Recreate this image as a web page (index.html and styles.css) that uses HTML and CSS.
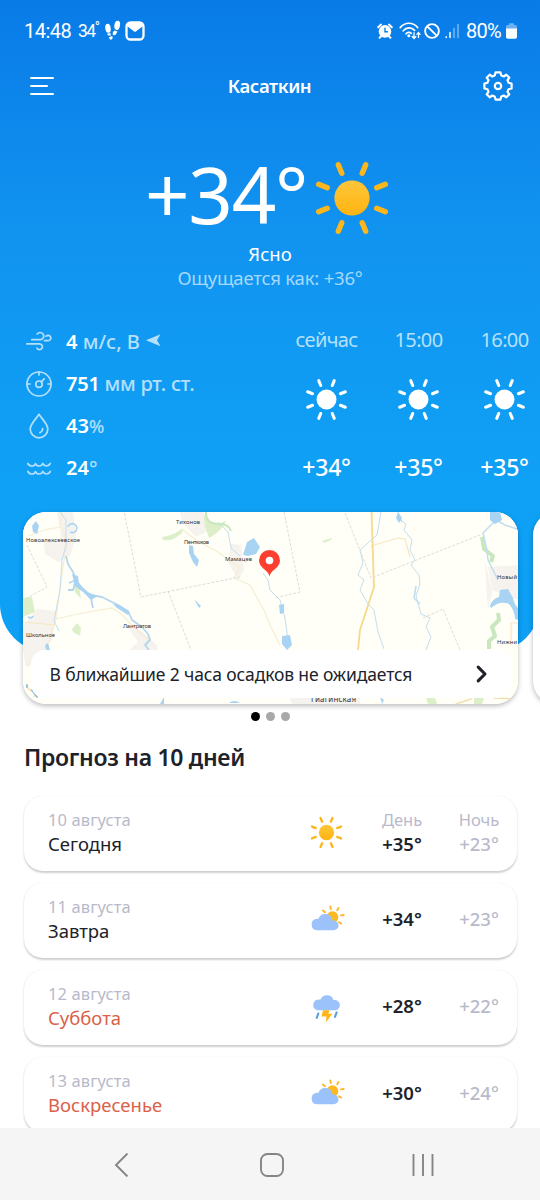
FILE: index.html
```html
<!DOCTYPE html>
<html lang="ru">
<head>
<meta charset="utf-8">
<title>Погода — Касаткин</title>
<link rel="stylesheet" href="styles.css">
</head>
<body>
<svg class="defs" width="0" height="0">
  <defs>
    <linearGradient id="sunFill" x1="0" y1="0" x2="0" y2="1"><stop offset="0" stop-color="#fdc63a"/><stop offset="1" stop-color="#ffb410"/></linearGradient>
    <symbol id="rays" viewBox="-38 -38 76 76">
      <g stroke="currentColor" stroke-width="5.4" stroke-linecap="round">
        <path d="M10.2-24.7 13.7-33.3M24.7-10.2 33.3-13.7M24.7 10.2 33.3 13.7M10.2 24.7 13.7 33.3M-10.2 24.7-13.7 33.3M-24.7 10.2-33.3 13.7M-24.7-10.2-33.3-13.7M-10.2-24.7-13.7-33.3"/>
      </g>
    </symbol>
    <symbol id="sun" viewBox="-38 -38 76 76">
      <use href="#rays" x="-38" y="-38" width="76" height="76"/>
      <circle r="17.6" fill="var(--core, currentColor)"/>
    </symbol>
    <symbol id="partly" viewBox="0 0 36 28">
      <path d="M20.3 2.5 20.8 5M28.6 4 27.2 6.2M30.9 11.4 33.7 11M28.9 18.3 31.1 19.6M12.9 6.5 15 8.2" stroke="#fdb62a" stroke-width="1.9" stroke-linecap="round" fill="none"/>
      <circle cx="22.4" cy="13.2" r="5.9" fill="#fdb91f"/>
      <path d="M6.8 26.3a5.8 5.8 0 0 1-.2-11.5c1 0 1.500.2 1.800.2a7.300 7.300 0 0 1 14.200 1.600c.4-.1.800-.1 1-.1a4.900 4.900 0 0 1 0 9.800z" fill="#9cc2fb"/>
    </symbol>
    <symbol id="storm" viewBox="0 0 36 34">
      <path d="M8 20.300a5.400 5.400 0 1 1 1.300-10.500 7 7 0 0 1 13.300.3 5.200 5.200 0 1 1 2.200 10.200z" fill="#9cc2fb"/>
      <path d="M12 20.300h6.400l-1 3.400h3.900l-6.200 8.600.3-5.900h-4.900z" fill="#fdb71a"/>
      <path d="M7.300 23.600 5.700 28M25.600 22.400 24 26.800" stroke="#5c9fdc" stroke-width="2.100" stroke-linecap="round"/>
    </symbol>
  </defs>
</svg>

<main class="screen">
  <section class="hero">
    <div class="status">
      <span class="clock">14:48</span>
      <span class="deg">34<sup>°</sup></span>
      <svg class="steps" viewBox="0 0 18 22" fill="#fff"><ellipse cx="4" cy="8.300" rx="2.700" ry="4.500" transform="rotate(-8 4 8.300)"/><path d="M3 13.800 6.300 12.900 7 15.500H4zM4.900 17.200l3.200-1.200c2 3-2.300 5.800-3.200 1.200z"/><ellipse cx="13.200" cy="5.300" rx="2.800" ry="4.700" transform="rotate(10 13.200 5.300)"/><path d="M10.300 10.500 13.500 11.600 12 14c-1.300 2.300-4.500 1-3-1.800z"/></svg>
      <svg class="mail" viewBox="0 0 20 20"><rect x="1.500" y="1.500" width="17" height="17" rx="4" fill="none" stroke="#fff" stroke-width="2.300"/><path d="M2 3.200Q2 2 4 2H16Q18 2 18 3.200V5L11.200 10.300Q10 11.300 8.800 10.300L2 5z" fill="#fff"/></svg>
      <span class="spacer"></span>
      <svg class="alarm" viewBox="0 0 16 16"><circle cx="8" cy="8.400" r="6.300" fill="#fff"/><path d="M1.200 4.200 4 1.600M14.800 4.200 12 1.600M2.600 14.800 4.300 13M13.400 14.800 11.700 13" stroke="#fff" stroke-width="2" stroke-linecap="round"/><path d="M8 4.800V8.700H11" fill="none" stroke="#0b80e6" stroke-width="1.400"/></svg>
      <svg class="wifi" viewBox="0 0 22 18" fill="none" stroke="#fff" stroke-width="1.700" stroke-linecap="round"><path d="M1.200 5.600C6-.2 14-.2 18.700 5.600M4.200 8.800C7.500 5 12.500 5 15.600 8.400M7 11.800C8.500 10 10.800 9.900 12.300 11.300"/><circle cx="9.800" cy="13.700" r=".7" fill="#fff"/><path d="M15 10.700V16M13.200 14.500 15 16.500 16.800 14.500M19.500 15.500V10.800M17.900 12.300 19.500 10.400 21.100 12.300" stroke-width="1.300"/></svg>
      <svg class="block" viewBox="0 0 16 16" fill="none" stroke="#fff" stroke-width="1.900"><circle cx="8" cy="8" r="6.900"/><path d="M3.300 3.300 12.700 12.700"/></svg>
      <svg class="signal" viewBox="0 0 14 16" stroke="#fff" stroke-width="1.500" stroke-linecap="round"><path d="M1.200 13.800V14.500M5 9.500V14.500"/><path d="M9 5.500V14.500M13 1.500V14.500" opacity=".45"/></svg>
      <span class="charge">80%</span>
      <svg class="battery" viewBox="0 0 11 16"><path d="M3 2V.8Q3 .2 3.600.2H7.400Q8 .2 8 .8V2H9.500Q11 2 11 3.500V6H0V3.500Q0 2 1.500 2z" fill="#fff" opacity=".4"/><path d="M0 5.500H11V14Q11 15.800 9.200 15.800H1.800Q0 15.800 0 14z" fill="#fff"/></svg>
    </div>

    <header class="topbar">
      <svg class="menu" viewBox="0 0 24 20" stroke="#fff" stroke-width="2" stroke-linecap="round"><path d="M1 2H23M1 10H17M1 18H23"/></svg>
      <h1 class="city">Касаткин</h1>
      <svg class="gear" viewBox="-15 -15 30 30" fill="none" stroke="#fff" stroke-width="2.200" stroke-linejoin="round"><path d="M-2.400-13.600H2.400L3.300-10.500Q4.700-10.100 5.800-9.500L8.300-11.300 11.300-8.300 9.500-5.800Q10.100-4.700 10.500-3.300L13.600-2.400V2.400L10.500 3.300Q10.100 4.700 9.500 5.800L11.300 8.300 8.300 11.300 5.800 9.500Q4.700 10.100 3.300 10.500L2.400 13.600H-2.400L-3.300 10.500Q-4.700 10.100-5.800 9.500L-8.300 11.300-11.300 8.300-9.500 5.800Q-10.100 4.700-10.500 3.300L-13.600 2.400V-2.400L-10.500-3.300Q-10.100-4.700-9.500-5.800L-11.300-8.300-8.300-11.300-5.800-9.500Q-4.700-10.100-3.300-10.500Z"/><circle r="3.200"/></svg>
    </header>

    <div class="now">
      <span class="now-temp">+34°</span>
      <svg class="now-sun"><use href="#sun"/></svg>
    </div>
    <p class="condition">Ясно</p>
    <p class="feels">Ощущается как: +36°</p>

    <div class="details">
      <ul class="metrics">
        <li>
          <svg class="metric-icon" viewBox="0 0 26 26"><path d="M.8 14.800H13.500A2.900 2.900 0 1 1 11 19.200M5.800 10.700H14.300A3.600 3.600 0 1 0 11.200 5M18.500 11.700H22.200A2.700 2.700 0 1 0 20 7.300"/></svg>
          <span class="m-wind"><b>4</b> м/с, В</span>
          <svg class="wind-dir" viewBox="0 0 15 13"><path d="M0 6.300 14.500.3 11 6.300 14.500 12.300z" fill="#b5e0fc"/></svg>
        </li>
        <li>
          <svg class="metric-icon" viewBox="0 0 26 26"><circle cx="13" cy="13" r="12"/><circle cx="13" cy="13.200" r="3.200"/><path d="M15.200 10.900 18.300 7.800M13 1V4M1 13H4M22 13H25"/></svg>
          <span class="m-press"><b>751</b> мм рт. ст.</span>
        </li>
        <li>
          <svg class="metric-icon" viewBox="0 0 26 26"><path d="M13 1.300C10.500 5.500 4.200 11 4.200 16A8.800 8.800 0 0 0 21.800 16C21.800 11 15.500 5.500 13 1.300ZM16.700 15.500Q16.500 18.500 13.800 19.700"/></svg>
          <span class="m-hum"><b>43</b>%</span>
        </li>
        <li>
          <svg class="metric-icon" viewBox="0 0 26 26"><path d="M1.800 8.500Q3.200 11 6 11T9.500 8.500Q10.200 11 13 11T16.700 8.500Q18 11 20.500 11T24.300 8.500M1.800 16.500Q3.200 19 6 19T9.500 16.500Q10.200 19 13 19T16.700 16.500Q18 19 20.500 19T24.300 16.500"/></svg>
          <span class="m-water"><b>24</b>°</span>
        </li>
      </ul>
      <div class="hours">
        <div class="hour"><span class="time now-label">сейчас</span><svg class="hour-sun"><use href="#sun"/></svg><span class="hour-temp">+34°</span></div>
        <div class="hour"><span class="time">15:00</span><svg class="hour-sun"><use href="#sun"/></svg><span class="hour-temp">+35°</span></div>
        <div class="hour"><span class="time">16:00</span><svg class="hour-sun"><use href="#sun"/></svg><span class="hour-temp">+35°</span></div>
      </div>
    </div>

    <div class="carousel">
      <article class="map-card">
        <svg class="map" viewBox="23 512 495 192" preserveAspectRatio="none">
          <rect x="23" y="512" width="495" height="192" fill="#fffff8"/>
          <g fill="#f6f2ee">
            <path d="M57 512H73L76 536 70 556 58 562 45 554 44 543 61 538ZM180 512H203L206 532 196 537 182 522ZM231 544 241 545 244 570 238 580 228 562ZM37 609 57 611 52 640 26 668 23 650V626ZM126 625 140 630 157 645 158 650H129L138 642ZM488 567 518 565V600L492 590ZM485 560 492 592 488 610 486 585ZM290 698H360V704H292Z"/>
          </g>
          <g fill="#dcefc9">
            <path d="M23 598 32 597 35 612 30 614 23 617ZM162 537Q175 535 183 528L182 533Q172 542 163 540ZM203 512Q206 523 218 524L226 521Q222 531 209 538L205 527ZM73 583 79 585 81 599 75 592ZM72 629 77 623 81 628 80 636 73 632ZM322 541 332 538 331 540 324 543ZM426 698H435L437 704H428ZM474 698H484L482 704H474Z"/>
          </g>
          <g fill="none" stroke="#c9e7bd" stroke-width="4" stroke-linejoin="round"><path d="M482 537 484 549 493 556 491 562M498 613 499 620 492 627 495 636 489 641V649" /><path d="M206 512Q205 524 219 524 229 524 231 531" stroke-width="2"/></g>
          <g fill="none" stroke="#f6edd2" stroke-width="1.200">
            <path d="M28 536 44 530 60 527 62 512M62 527 67 545 64 560 60 590 56 618 48 645 28 666M56 619 78 614 112 608 120 613 150 642M183 530 196 540 218 552 240 568 234 578 250 585 257 598 264 610 271 627 280 645"/>
            <path d="M23 622 55 625M371 546 398 538 405 539 410 557M511 645V623H518" stroke="#f8e6bf"/>
          </g>
          <path d="M371.500 512 374 587 360 630 358 650" fill="none" stroke="#f6d98a" stroke-width="1.800"/>
          <g fill="none" stroke="#d8d8d6" stroke-width=".9" stroke-dasharray="3 1.500">
            <path d="M124.500 513 141 597 240 577M168 591 191 650M27 545 47 587 27 598M284 512 300 592 275 598M345 513 371 578 480 535M423 618 443 609 460 650"/>
          </g>
          <g fill="none" stroke="#c3deed" stroke-width="1" stroke-linejoin="round">
            <path d="M60 512 66 520 66 545 62 560 60 590 54 621 59 631"/>
            <path d="M66 556 68 564 73 572 76 580 82 588 90 595 102 597 116 604 128 611 132 620 142 627 148 634 150 640 145 645 149 650M68 590 73 590 76 580 69 583M90 594 93 608" stroke="#b3d6ee" stroke-width="1.800"/>
            <path d="M218 522 228 532 231 548 240 556M263 573 268 580 270 590 280 600 285 618 288 640" />
            <path d="M381 512 377 535 360 550 363 563 358 575 364 580 360 590 368 604 374 610 378 632 384 649"/>
            <path d="M398 512 400 520 406 524 404 530 412 540 410 550 415 560 411 565 419 575 420 584 416 596 421 614 430 618 426 627 431 637 426 650"/>
            <path d="M398 515 402 522M416 586 414 598 420 604M520 530 505 525 496 520 483 533 487 550 488 560 498 580" stroke-width="1.600"/>
          </g>
          <g fill="#a9d3f2">
            <path d="M32 526 36 521 39 526 37 534 33 532ZM72 574 78 576 79 584 87 592 98 596 91 600 83 592 75 586ZM113 604 120 605 130 613 128 615 117 608ZM189 545 193 546 194 554 199 560 197 567 193 562 189 553ZM243 555 247 542 254 538 260 547 256 554 248 556ZM279 605 284 604 284 613 280 614ZM282 636 290 635 292 645 287 650 282 644ZM194 599 201 606 199 608ZM490 512H500L502 520 495 524 490 520ZM490 606Q492 599 499 597L500 590 508 589 513 598Q514 604 518 608V620L515 619Q515 611 509 604 500 600 491 608ZM45 645 48 643 50 650H46ZM229 703Q234 699 240 703ZM160 704 164 697V704ZM380 697 384 700 382 704ZM398 512 402 518 399 523 396 518Z"/>
            <path d="M68 527a4.500 4.500 0 1 1 2 5M28 617q4 2 5-1" fill="none" stroke="#a9d3f2" stroke-width="1.600"/>
          </g>
          <g fill="none" stroke-linecap="round"><path d="M27 687 31 691 35 690M34 696 38 694M456 704 471 699M494 698 518 699" stroke="#f2dfae" stroke-width="1.500"/><path d="M32 690 37 697M27 685V687" stroke="#8cbbe0" stroke-width="1.800"/></g>
          <g class="places">
            <text x="26" y="542" textLength="54">Новоалексеевское</text>
            <text x="26" y="637" textLength="29">Школьное</text>
            <text x="176" y="524" textLength="24">Тихонов</text>
            <text x="184" y="544" textLength="25">Пентюхов</text>
            <text x="225" y="561" textLength="27">Мамацев</text>
            <text x="123" y="628" textLength="28">Лантратов</text>
            <text x="497" y="579" textLength="20">Новый</text>
            <text x="497" y="644" textLength="20">Нижни</text>
            <text x="311" y="702" textLength="45" class="town">Гиагинская</text>
          </g>
          <path d="M269.500 576.500C268.500 570 259 568 259 560.500A10.500 10.500 0 0 1 280 560.500C280 568 270.500 570 269.500 576.500Z" fill="#fd3f32"/>
          <circle cx="269.500" cy="560.500" r="3.800" fill="#fff"/>
        </svg>
        <div class="notice">
          <span class="notice-text">В ближайшие 2 часа осадков не ожидается</span>
          <svg class="chevron" viewBox="0 0 12 18"><path d="M2.200 2.200 9 9 2.200 15.800" fill="none" stroke="#20222a" stroke-width="3.100" stroke-linecap="round" stroke-linejoin="round"/></svg>
        </div>
      </article>
      <article class="map-card next-card"></article>
    </div>
  </section>

  <div class="dots"><i class="active"></i><i></i><i></i></div>

  <section class="forecast">
    <h2 class="forecast-title">Прогноз на 10 дней</h2>
    <ul class="days">
      <li class="day today">
        <div class="when"><span class="date">10 августа</span><span class="name">Сегодня</span></div>
        <svg class="day-icon small-sun"><use href="#sun"/></svg>
        <div class="t hi"><span class="label">День</span><span class="value">+35°</span></div>
        <div class="t lo"><span class="label">Ночь</span><span class="value">+23°</span></div>
      </li>
      <li class="day">
        <div class="when"><span class="date">11 августа</span><span class="name">Завтра</span></div>
        <svg class="day-icon partly"><use href="#partly"/></svg>
        <div class="t hi"><span class="value">+34°</span></div>
        <div class="t lo"><span class="value">+23°</span></div>
      </li>
      <li class="day">
        <div class="when"><span class="date">12 августа</span><span class="name weekend">Суббота</span></div>
        <svg class="day-icon storm"><use href="#storm"/></svg>
        <div class="t hi"><span class="value">+28°</span></div>
        <div class="t lo"><span class="value">+22°</span></div>
      </li>
      <li class="day">
        <div class="when"><span class="date">13 августа</span><span class="name weekend">Воскресенье</span></div>
        <svg class="day-icon partly"><use href="#partly"/></svg>
        <div class="t hi"><span class="value">+30°</span></div>
        <div class="t lo"><span class="value">+24°</span></div>
      </li>
    </ul>
  </section>

  <nav class="navbar">
    <svg viewBox="0 0 24 24"><path d="M18.500.500 7 12 18.500 23.500"/></svg>
    <svg viewBox="0 0 24 24"><rect x="1" y="1" width="22" height="22" rx="6.500"/></svg>
    <svg viewBox="0 0 24 24"><path d="M2.500 1V23M12 1V23M21.500 1V23"/></svg>
  </nav>
</main>
</body>
</html>
```
FILE: styles.css
```css
* { box-sizing: border-box; margin: 0; padding: 0; }
ul { list-style: none; }
svg { display: block; flex: none; }
.defs { position: absolute; }

body {
  width: 540px;
  height: 1200px;
  overflow: hidden;
  background: #fff;
  font-family: "Noto Sans", "Open Sans", sans-serif;
  color: #20222a;
}
.screen { height: 1200px; display: flex; flex-direction: column; overflow: hidden; }

/* Hero */
.hero {
  flex: none;
  height: 652px;
  display: flex;
  flex-direction: column;
  color: #fff;
  background: linear-gradient(#097be7 0, #1193f0 230px, #0fa1f5 480px, #0c9ff4 100%);
  border-radius: 0 0 48px 48px;
}
.hero > * { flex: none; }

.status {
  height: 62px;
  padding: 0 23px 0 24px;
  display: flex;
  align-items: center;
  font-family: Roboto, sans-serif;
  white-space: nowrap;
}
.spacer { flex: 1; }
.clock { width: 54px; font-size: 20px; letter-spacing: -.5px; }
.deg { width: 26px; font-size: 17.500px; letter-spacing: -1.500px; }
.deg sup { font-size: 14px; line-height: 0; vertical-align: 5px; }
.steps { width: 18px; height: 22px; }
.mail { width: 20px; height: 20px; margin-left: 3px; }
.alarm { width: 16px; height: 16px; margin-right: 6px; }
.wifi { width: 22px; height: 18px; margin-right: 3px; }
.block { width: 16px; height: 16px; margin-right: 5px; }
.signal { width: 14px; height: 16px; margin-right: 7px; }
.charge { width: 40px; font-size: 20px; letter-spacing: -.7px; }
.battery { width: 11px; height: 16px; }

.topbar {
  height: 48px;
  padding: 0 27px 0 30px;
  display: grid;
  grid-template-columns: 60px 1fr 60px;
  align-items: center;
}
.menu { width: 24px; height: 20px; }
.city { text-align: center; padding-right: 4px; font-size: 18.500px; font-weight: 600; line-height: 48px; letter-spacing: -.4px; }
.gear { width: 30px; height: 30px; justify-self: end; }

.now {
  height: 126px;
  margin-top: 2px;
  padding-left: 145px;
  display: flex;
}
.now-temp { width: 169px; margin-top: 29px; font-size: 78px; line-height: 106px; letter-spacing: -1.300px; white-space: nowrap; }
.now-sun { width: 76px; height: 76px; margin-top: 48px; color: #fbb61c; --core: url(#sunFill); }
.condition { margin-top: 2px; text-align: center; font-size: 18.500px; line-height: 28px; }
.feels { text-align: center; font-size: 18.500px; line-height: 20px; letter-spacing: -.2px; color: #a5d8fb; }

.details { margin-top: 33px; display: flex; height: 191px; }
.metrics { flex: none; width: 280.500px; padding-left: 26px; }
.metrics li {
  height: 42px;
  display: flex;
  align-items: center;
  font-size: 20px;
  font-weight: 500;
  color: #b5e0fc;
  white-space: nowrap;
}
.metrics b { font-weight: 600; color: #fff; }
.metrics span { line-height: 26px; margin-top: -1px; }
.m-press { letter-spacing: -.25px; }
.m-hum { font-size: 18px; }
.m-hum b { font-size: 20px; }
.metric-icon { width: 26px; height: 26px; margin-right: 14px; fill: none; stroke: #b5e0fc; stroke-width: 1.700; stroke-linecap: round; stroke-linejoin: round; }
.wind-dir { width: 15px; height: 13px; margin: -3px 0 0 6px; }

.hours { flex: none; display: grid; grid-template-columns: 92px 92px 80px; }
.hour { display: flex; flex-direction: column; align-items: center; }
.time { margin-top: -2px; font-size: 20px; line-height: 42px; letter-spacing: -.65px; color: #b5e0fc; }
.hour-sun { width: 43px; height: 43px; margin-top: 17px; }
.hour-temp { margin-top: 25px; font-size: 23px; line-height: 42px; font-weight: 500; letter-spacing: -.2px; }

/* Map carousel */
.carousel { display: flex; gap: 15px; padding-left: 22.500px; }
.map-card {
  flex: none;
  width: 495px;
  height: 192px;
  display: grid;
  overflow: hidden;
  border-radius: 23px;
  background: #fff;
  box-shadow: 0 2px 5px rgba(0, 0, 0, .27);
}
.map, .notice { grid-area: 1 / 1; }
.map { width: 495px; height: 192px; }
.places { font-size: 5.800px; fill: #333; }
.town { font-size: 8px; }
.notice {
  position: relative;
  align-self: end;
  height: 48px;
  margin: 0 7px 6px 8px;
  padding: 0 23px 0 19px;
  display: flex;
  align-items: center;
  justify-content: space-between;
  background: #fff;
  border-radius: 14px;
  color: #20222a;
  font-size: 17.500px;
  letter-spacing: -.13px;
  white-space: nowrap;
}
.notice-text { margin-top: -1px; }
.chevron { width: 12px; height: 18px; }

.dots { flex: none; display: flex; justify-content: center; gap: 6px; margin-top: 59.500px; }
.dots i { width: 9px; height: 9px; border-radius: 50%; background: #a8a8a8; }
.dots .active { background: #000; }

/* Forecast */
.forecast { flex: 1; min-height: 0; padding: 0 23.500px 0 24px; overflow: hidden; }
.forecast-title { margin-top: 20px; font-size: 23px; line-height: 32px; font-weight: 600; letter-spacing: -.3px; white-space: nowrap; }
.days { margin-top: 23px; display: flex; flex-direction: column; gap: 12px; }
.day {
  height: 75px;
  padding-left: 24px;
  display: grid;
  grid-template-columns: 255px 52px 24px 46px 33px 42px;
  border-radius: 19px;
  background: #fff;
  box-shadow: 0 1.500px 2px rgba(0, 0, 0, .19), 0 0 1px rgba(0, 0, 0, .06);
}
.when { padding-top: 12px; display: flex; flex-direction: column; line-height: 24px; white-space: nowrap; }
.date { font-size: 16.500px; letter-spacing: .1px; color: #b8bacb; }
.name { font-size: 18.500px; }
.weekend { color: #db6148; }
.day-icon { justify-self: center; align-self: center; }
.small-sun { width: 33px; height: 33px; margin: -1px 5px 0 0; color: #fbb61c; --core: url(#sunFill); }
.partly { width: 36px; height: 28px; margin: -5px 0 0 -2px; }
.storm { width: 36px; height: 34px; margin: 0 0 1px; }
.t { display: flex; flex-direction: column; justify-content: center; text-align: center; line-height: 24px; padding-bottom: 3px; white-space: nowrap; }
.today .t { padding-bottom: 2px; }
.hi { grid-column: 4; }
.lo { grid-column: 6; }
.label { font-size: 16.500px; color: #b8bacb; }
.value { font-size: 18.500px; font-weight: 600; }
.lo .value { color: #b8bacb; font-weight: 500; }

/* System navigation */
.navbar {
  flex: none;
  height: 72px;
  padding: 2px 105px 0 109px;
  display: flex;
  justify-content: space-between;
  align-items: center;
  background: #f5f5f5;
}
.navbar svg { width: 24px; height: 24px; fill: none; stroke: #858585; stroke-width: 1.900; }
```
